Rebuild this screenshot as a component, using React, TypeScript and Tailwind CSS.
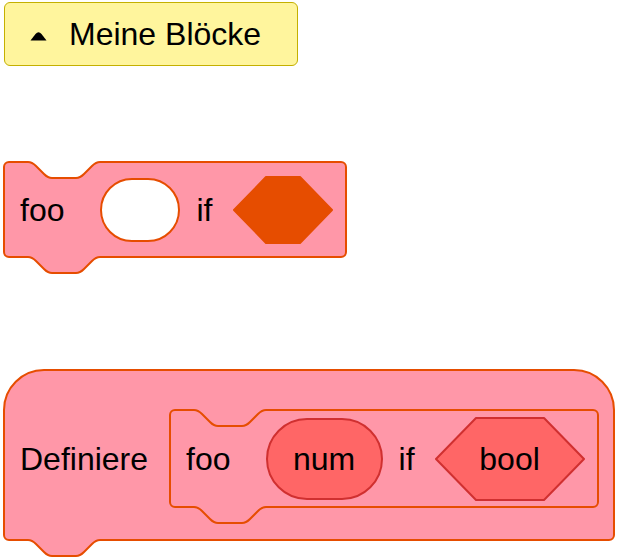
import React from 'react';

const PINK = '#ff97a8';
const ORANGE = '#e64d00';

// notch drawn as in scratch blocks, scaled x2
function stackPath(w: number, h: number, top: 'notch' | 'hat', r = 5) {
  const head =
    top === 'hat'
      ? `M0,40 A40,40 0 0 1 40,0 H${w - 40} A40,40 0 0 1 ${w},40`
      : `M0,${r} A${r},${r} 0 0 1 ${r},0 H24 c4,0 6,2 8,4 l8,8 c2,2 4,4 8,4 h24 c4,0 6,-2 8,-4 l8,-8 c2,-2 4,-4 8,-4 H${w - r} A${r},${r} 0 0 1 ${w},${r}`;
  return (
    head +
    ` V${h - r} A${r},${r} 0 0 1 ${w - r},${h} H96 c-4,0 -6,2 -8,4 l-8,8 c-2,2 -4,4 -8,4 h-24 c-4,0 -6,-2 -8,-4 l-8,-8 c-2,-2 -4,-4 -8,-4 H${r} A${r},${r} 0 0 1 0,${h - r} Z`
  );
}

function Block({ w, h, top = 'notch', className, children }: { w: number; h: number; top?: 'notch' | 'hat'; className: string; children: React.ReactNode }) {
  return (
    <div className={`relative shrink-0 ${className}`}>
      <svg className="absolute left-0 top-0 overflow-visible" width={w} height={h}>
        <path d={stackPath(w, h, top)} fill={PINK} stroke={ORANGE} strokeWidth={2} strokeLinejoin="round" />
      </svg>
      <div className="relative flex h-full items-center">{children}</div>
    </div>
  );
}

function Hexagon({ w, h, slope, fill, stroke, children }: { w: number; h: number; slope: number; fill: string; stroke: string; children?: React.ReactNode }) {
  const pts = `${slope},0 ${w - slope},0 ${w},${h / 2} ${w - slope},${h} ${slope},${h} 0,${h / 2}`;
  return (
    <div className="relative flex shrink-0 items-center justify-center" style={{ width: w, height: h }}>
      <svg className="absolute left-0 top-0 overflow-visible" width={w} height={h}>
        <polygon points={pts} fill={fill} stroke={stroke} strokeWidth={2} strokeLinejoin="round" />
      </svg>
      <span className="relative">{children}</span>
    </div>
  );
}

export default function App() {
  return (
    <div className="flex min-h-screen flex-col items-start bg-white pl-[4px] pt-[2px] font-['Liberation_Sans',Arial,sans-serif] text-[32px] leading-none text-black">
      {/* palette category header */}
      <div className="flex h-[64px] w-[294px] items-center rounded-[6px] border-[1.5px] border-[#c4b000] bg-[#fff59d] pl-[25px]">
        <svg width="17" height="10" viewBox="0 0 17 10" className="mr-[22px] mt-[4px]">
          <path d="M0.5 9.5 L5.5 3 Q8.5 -0.5 11.5 3 L16.5 9.5 Z" fill="#000" />
        </svg>
        <span>Meine Blöcke</span>
      </div>

      {/* call block */}
      <Block w={342} h={95} className="mt-[96px] h-[95px] w-[342px]">
        <span className="ml-[16px]">foo</span>
        <div className="ml-[36px] h-[64px] w-[80px] rounded-full border-2 border-[#e64d00] bg-white" />
        <span className="ml-[16px]">if</span>
        <div className="ml-[22px]">
          <Hexagon w={98} h={66} slope={32} fill={ORANGE} stroke={ORANGE} />
        </div>
      </Block>

      {/* definition hat */}
      <Block w={610} h={170} top="hat" className="mt-[113px] h-[170px] w-[610px]">
        <div className="flex items-center pt-[7px]">
          <span className="ml-[16px]">Definiere</span>
          <Block w={428} h={97} className="ml-[22px] h-[97px] w-[428px]">
            <span className="ml-[16px]">foo</span>
            <div className="ml-[35px] flex h-[82px] w-[117px] items-center justify-center rounded-full border-2 border-[#d03030] bg-[#ff6666]">
              num
            </div>
            <span className="ml-[16px]">if</span>
            <div className="ml-[21px]">
              <Hexagon w={148} h={82} slope={40} fill="#ff6666" stroke="#d03030">
                bool
              </Hexagon>
            </div>
          </Block>
        </div>
      </Block>
    </div>
  );
}
